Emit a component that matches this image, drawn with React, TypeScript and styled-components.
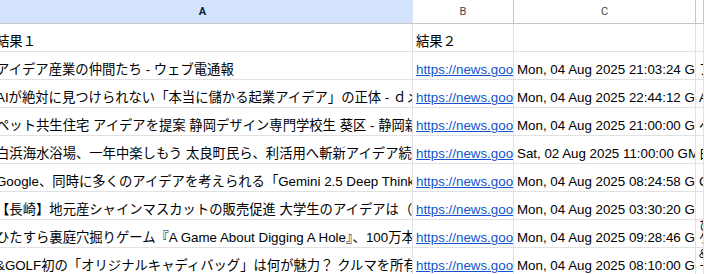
import React from "react";
import styled, { createGlobalStyle } from "styled-components";

const GlobalStyle = createGlobalStyle`
  html, body {
    margin: 0;
    padding: 0;
    background: #fff;
    overflow: hidden;
  }
`;

const COLS = "420px 101px 182px 8px";

const Viewport = styled.div`
  width: 704px;
  height: 274px;
  overflow: hidden;
`;

const Sheet = styled.div`
  margin-left: -7px;
  width: 711px;
  font-family: "Liberation Sans", Arial, "Noto Sans CJK JP", sans-serif;
  font-size: 13.33px;
  color: #000;
`;

const HeaderRow = styled.div`
  display: grid;
  grid-template-columns: ${COLS};
  height: 23px;
  border-bottom: 1px solid #c4c7c5;
`;

const ColHead = styled.div<{ $selected?: boolean }>`
  display: flex;
  align-items: center;
  justify-content: center;
  font-family: Roboto, "Liberation Sans", sans-serif;
  font-size: 11px;
  font-weight: ${(p) => (p.$selected ? 700 : 400)};
  color: ${(p) => (p.$selected ? "#0b1f3f" : "#444746")};
  background: ${(p) => (p.$selected ? "#d3e3fd" : "#fff")};
  border-right: 1px solid ${(p) => (p.$selected ? "#d3e3fd" : "#c4c7c5")};
`;

const Row = styled.div`
  display: grid;
  grid-template-columns: ${COLS};
  height: 28px;
`;

const Cell = styled.div<{ $wrap?: boolean }>`
  display: flex;
  flex-direction: column;
  justify-content: flex-end;
  overflow: hidden;
  white-space: nowrap;
  padding: 0 3px 1px;
  line-height: ${(p) => (p.$wrap ? "13px" : "17px")};
  font-size: ${(p) => (p.$wrap ? "12px" : "13.33px")};
  border-right: 1px solid #e1e1e1;
  border-bottom: 1px solid #e1e1e1;
`;

const Link = styled.a`
  color: #1155cc;
  text-decoration: underline;
`;

type Item = { a: string; c: string; d: string; wrap?: boolean };

const items: Item[] = [
  { a: "アイデア産業の仲間たち - ウェブ電通報", c: "Mon, 04 Aug 2025 21:03:24 GMT", d: "アイデア産業" },
  { a: "AIが絶対に見つけられない「本当に儲かる起業アイデア」の正体 - ｄメニューニュース", c: "Mon, 04 Aug 2025 22:44:12 GMT", d: "AIが絶対に" },
  { a: "ペット共生住宅 アイデアを提案 静岡デザイン専門学校生 葵区 - 静岡新聞", c: "Mon, 04 Aug 2025 21:00:00 GMT", d: "ペット共生" },
  { a: "白浜海水浴場、一年中楽しもう 太良町民ら、利活用へ斬新アイデア続々", c: "Sat, 02 Aug 2025 11:00:00 GMT", d: "白浜海水浴場" },
  { a: "Google、同時に多くのアイデアを考えられる「Gemini 2.5 Deep Think」", c: "Mon, 04 Aug 2025 08:24:58 GMT", d: "Google、" },
  { a: "【長崎】地元産シャインマスカットの販売促進 大学生のアイデアは（", c: "Mon, 04 Aug 2025 03:30:20 GMT", d: "" },
  { a: "ひたすら裏庭穴掘りゲーム『A Game About Digging A Hole』、100万本", c: "Mon, 04 Aug 2025 09:28:46 GMT", d: "ひたすら\nゲーム", wrap: true },
  { a: "&GOLF初の「オリジナルキャディバッグ」は何が魅力？ クルマを所有", c: "Mon, 04 Aug 2025 08:10:00 GMT", d: "&GOLF\nーー", wrap: true },
];

export default function App() {
  return (
    <Viewport>
      <GlobalStyle />
      <Sheet>
        <HeaderRow>
          <ColHead $selected>A</ColHead>
          <ColHead>B</ColHead>
          <ColHead>C</ColHead>
          <ColHead />
        </HeaderRow>
        <Row>
          <Cell>結果１</Cell>
          <Cell>結果２</Cell>
          <Cell />
          <Cell />
        </Row>
        {items.map((it, i) => (
          <Row key={i}>
            <Cell>{it.a}</Cell>
            <Cell>
              <span>
                <Link href="#">https://news.google.com/rss/articles</Link>
              </span>
            </Cell>
            <Cell>{it.c}</Cell>
            <Cell $wrap={it.wrap}>
              {it.d.split("\n").map((l, j) => (
                <span key={j}>{l}</span>
              ))}
            </Cell>
          </Row>
        ))}
      </Sheet>
    </Viewport>
  );
}
